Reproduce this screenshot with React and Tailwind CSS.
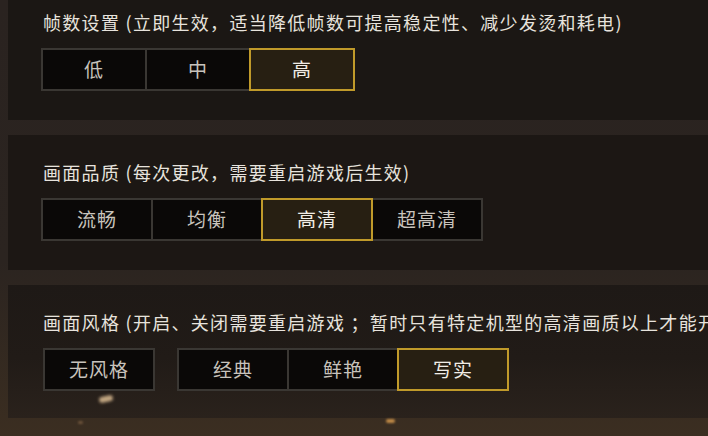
import React from "react";

const FONT = { fontFamily: '"Noto Sans CJK SC", "Noto Sans", sans-serif' };

function Btn({ label, selected, width, first }) {
  return (
    <div
      className={
        "relative flex h-[43px] items-center justify-center border-2 text-[19px] tracking-[1px] " +
        (first ? "" : "-ml-[2px] ") +
        (selected
          ? "z-10 border-[#c09a2a] bg-[#271f12] text-[#f1ede6]"
          : "border-[#3a3733] bg-[#0a0807] text-[#c8c3bc]")
      }
      style={{ width }}
    >
      {label}
    </div>
  );
}

function Group({ items, selected, width }) {
  return (
    <div className="flex">
      {items.map((it, i) => (
        <Btn key={it} label={it} selected={it === selected} width={width} first={i === 0} />
      ))}
    </div>
  );
}

function Panel({ title, children, top = "pt-[25px]", extra = "" }) {
  return (
    <div className={"relative ml-[8px] overflow-hidden pb-[29px] pl-[33px] " + top + " " + extra}>
      <div className="ml-[2px] h-[24px] whitespace-nowrap text-[18px] leading-[24px] tracking-[1.3px] text-[#e7e3dd]">
        {title}
      </div>
      <div className="mt-[14px]">{children}</div>
    </div>
  );
}

export default function App() {
  return (
    <div
      className="relative h-[436px] w-[708px] overflow-hidden bg-[linear-gradient(to_bottom,#2a2320_0%,#2b2420_60%,#3b2e21_100%)]"
      style={FONT}
    >
      <div className="flex flex-col gap-[15px]">
        <Panel
          title="帧数设置 (立即生效，适当降低帧数可提高稳定性、减少发烫和耗电)"
          top="pt-[10px]"
          extra="bg-[#1b1714]"
        >
          <Group items={["低", "中", "高"]} selected="高" width={106} />
        </Panel>
        <Panel
          title="画面品质 (每次更改，需要重启游戏后生效)"
          extra="bg-[#1c1714]"
        >
          <Group items={["流畅", "均衡", "高清", "超高清"]} selected="高清" width={112} />
        </Panel>
        <Panel
          title="画面风格 (开启、关闭需要重启游戏 ；暂时只有特定机型的高清画质以上才能开启)"
          extra="h-[133px] bg-[linear-gradient(to_bottom,#1e1916_0%,#211b17_55%,#2a221c_100%)]"
        >
          <div className="ml-[2px] flex gap-[22px]">
            <Group items={["无风格"]} selected="" width={112} />
            <Group items={["经典", "鲜艳", "写实"]} selected="写实" width={112} />
          </div>
          <div className="pointer-events-none absolute left-[91px] top-[111px] h-[6px] w-[14px] -rotate-12 rounded-full bg-[#e8c79a] opacity-80 blur-[1.5px]" />
        </Panel>
      </div>
      <div className="pointer-events-none absolute left-[386px] top-[419px] h-[4px] w-[9px] rounded-full bg-[#e0a050] opacity-80 blur-[1px]" />
      <div className="pointer-events-none absolute left-[78px] top-[421px] h-[3px] w-[5px] rounded-full bg-[#a07a55] opacity-50 blur-[1px]" />
    </div>
  );
}
